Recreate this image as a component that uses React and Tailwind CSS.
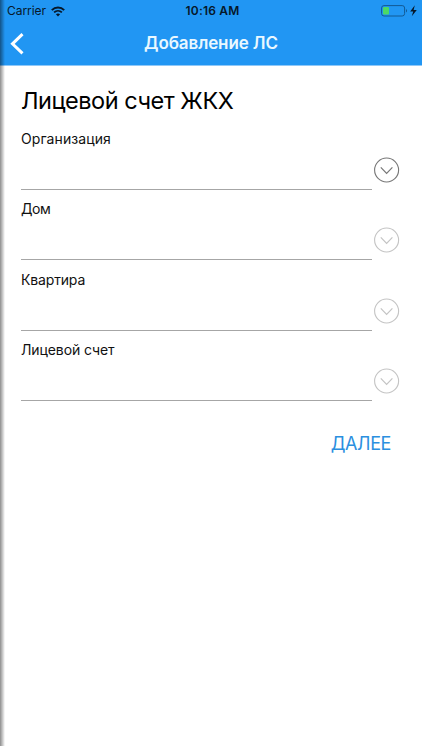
import clsx from "clsx";

const FIELDS = [
  { label: "Организация", tracking: "tracking-[0.08px]", active: true },
  { label: "Дом", tracking: "tracking-[-0.4px]", active: false },
  { label: "Квартира", tracking: "tracking-[-0.15px]", active: false },
  { label: "Лицевой счет", tracking: "tracking-[-0.1px]", active: false },
];

function WifiIcon() {
  return (
    <svg width="14" height="11" viewBox="0 0 14 11" fill="none" stroke="#06182a">
      <path d="M0.8 4.1C4.3 0.7 9.7 0.7 13.2 4.1" strokeWidth="2" />
      <path d="M3.1 6.4C5.3 4.3 8.7 4.3 10.9 6.4" strokeWidth="1.8" />
      <path d="M7 10.4L4.9 8.2C6.1 7.1 7.9 7.1 9.1 8.2Z" fill="#06182a" stroke="none" />
    </svg>
  );
}

function BatteryIcon() {
  return (
    <svg width="37" height="12" viewBox="0 0 37 12" fill="none">
      <rect x="0.6" y="0.6" width="23" height="10.4" rx="2.4" stroke="#125a94" />
      <rect x="2" y="2" width="6" height="7.6" rx="1" fill="#4cd964" />
      <path d="M25 4C26.4 4.6 26.4 7 25 7.6Z" fill="#125a94" />
      <path d="M33.8 0.3L29.2 6.4H32.2L30.8 11.2L35.8 4.9H32.6Z" fill="#06182a" />
    </svg>
  );
}

function StatusBar() {
  return (
    <div className="grid h-[22px] grid-cols-3 items-center pl-[7px] pr-[4px] text-[12px] text-[#06182a]">
      <div className="flex items-center gap-[6px]">
        <span className="w-[38px] whitespace-nowrap tracking-[-0.05px]">Carrier</span>
        <WifiIcon />
      </div>
      <span className="whitespace-nowrap text-center font-semibold tracking-[0.2px]">10:16 AM</span>
      <div className="flex justify-end">
        <BatteryIcon />
      </div>
    </div>
  );
}

function Field({ label, tracking, active }) {
  return (
    <div className="flex h-[70.3px]">
      <div className="h-[61px] w-[351px] border-b border-[#a6a6a6]">
        <label className={clsx("block whitespace-nowrap text-[14px] leading-[20px] text-[#111]", tracking)}>
          {label}
        </label>
      </div>
      <button className={clsx("ml-[1.5px] mt-[28px] h-[26px] w-[26px]", active ? "text-[#777]" : "text-[#c4c4c4]")}>
        <svg width="26" height="26" viewBox="0 0 26 26" fill="none" stroke="currentColor">
          <circle cx="12.6" cy="13" r="12" strokeWidth="1.1" />
          <path d="M6.8 10.4L12.6 16.4L18.4 10.4" strokeWidth="1.2" />
        </svg>
      </button>
    </div>
  );
}

export default function App() {
  return (
    <div className="relative h-[750px] w-[422px] overflow-hidden bg-white font-['Inter','Liberation_Sans',sans-serif]">
      <header className="h-[66px] border-b border-[#8fc8f8] bg-[#2196f3]">
        <StatusBar />
        <div className="grid h-[43px] grid-cols-[40px_1fr_40px] items-center">
          <button className="pl-[10px]">
            <svg width="14" height="22" viewBox="0 0 14 22" fill="none" stroke="#fff">
              <path d="M12.5 1.2L2.5 10.8L12.5 20.4" strokeWidth="3" />
            </svg>
          </button>
          <h1 className="text-center text-[17px] font-semibold tracking-[-0.1px] text-[#e9f8ff]">Добавление ЛС</h1>
        </div>
      </header>
      <main className="pl-[21px] pr-[22px] pt-[19px]">
        <h2 className="h-[44px] whitespace-nowrap text-[23.5px] leading-[32px] tracking-[-0.48px] text-black">
          Лицевой счет ЖКХ
        </h2>
        {FIELDS.map((field) => (
          <Field key={field.label} {...field} />
        ))}
        <div className="flex justify-end pr-[9px] pt-[20px]">
          <button className="whitespace-nowrap text-[18px] leading-[28px] tracking-[-0.4px] text-[#2b8fdf]">ДАЛЕЕ</button>
        </div>
      </main>
      <div className="absolute left-0 top-0 h-[746px] w-[5px] bg-linear-to-r from-black/45 to-transparent" />
    </div>
  );
}
